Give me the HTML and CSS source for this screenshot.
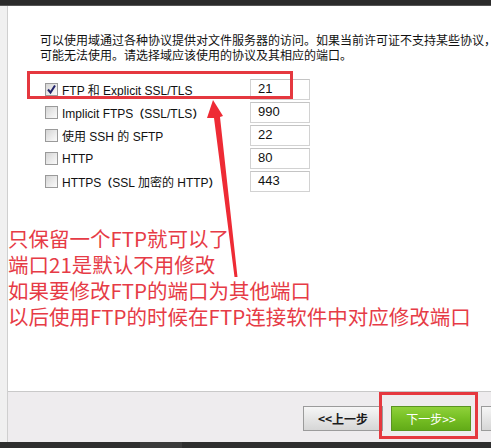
FILE: index.html
```html
<!DOCTYPE html>
<html lang="zh-CN">
<head>
<meta charset="utf-8">
<title>协议设置</title>
<link rel="stylesheet" href="styles.css">
</head>
<body>
<div class="page">
  <div class="topbar"></div>
  <div class="main">
    <div class="leftstrip"></div>
    <div class="content">
      <div class="body">
        <div class="intro">
          <p>可以使用域通过各种协议提供对文件服务器的访问。如果当前许可证不支持某些协议，</p>
          <p>可能无法使用。请选择域应该使用的协议及其相应的端口。</p>
        </div>
        <div class="options">
          <div class="row">
            <span class="cb checked"><svg viewBox="0 0 11 11" width="11" height="11"><path d="M2 5.5 L4.5 8.5 L9 1.5" fill="none" stroke="#22236a" stroke-width="2"/></svg></span>
            <span class="label">FTP 和 Explicit SSL/TLS</span>
            <span class="port">21</span>
          </div>
          <div class="row">
            <span class="cb"></span>
            <span class="label">Implicit FTPS<span class="paren">（</span>SSL/TLS<span class="paren">）</span></span>
            <span class="port">990</span>
          </div>
          <div class="row">
            <span class="cb"></span>
            <span class="label">使用 SSH 的 SFTP</span>
            <span class="port">22</span>
          </div>
          <div class="row">
            <span class="cb"></span>
            <span class="label">HTTP</span>
            <span class="port">80</span>
          </div>
          <div class="row">
            <span class="cb"></span>
            <span class="label">HTTPS<span class="paren">（</span>SSL 加密的 HTTP<span class="paren">）</span></span>
            <span class="port">443</span>
          </div>
          <div class="hl-box"></div>
        </div>
        <div class="notes">
          <p>只保留一个FTP就可以了</p>
          <p>端口21是默认不用修改</p>
          <p>如果要修改FTP的端口为其他端口</p>
          <p>以后使用FTP的时候在FTP连接软件中对应修改端口</p>
        </div>
      </div>
      <div class="footer">
        <button class="btn grey">&lt;&lt;上一步</button>
        <button class="btn green">下一步&gt;&gt;</button>
        <button class="btn grey third"></button>
        <div class="hl-next"></div>
      </div>
    </div>
  </div>
  <div class="bottombar"><span class="seg"></span></div>
  <svg class="arrow" width="491" height="448" viewBox="0 0 491 448">
    <polygon points="213,100 223,116 220,117 237.5,277 234.5,277 214,118 207,118" fill="#ee2b35"/>
  </svg>
</div>
</body>
</html>
```
FILE: styles.css
```css
* { box-sizing: border-box; }
html, body { margin: 0; padding: 0; }
body {
  width: 491px;
  height: 448px;
  overflow: hidden;
  background: #ffffff;
  font-family: "Liberation Sans", "Noto Sans CJK SC", sans-serif;
  font-size: 12px;
  color: #000;
}
p { margin: 0; }

.page {
  position: relative;
  width: 491px;
  height: 448px;
  display: flex;
  flex-direction: column;
}

.topbar {
  height: 6px;
  background: #2b2b2b;
  border-bottom: 1px solid #555;
}

.main {
  flex: 1;
  display: flex;
  min-height: 0;
}

.leftstrip {
  width: 8px;
  background: #f0f0f0;
  border-right: 1px solid #cfcfcf;
}

.content {
  flex: 1;
  display: flex;
  flex-direction: column;
  min-width: 0;
  overflow: hidden;
}

.body {
  flex: 1;
  padding-top: 26px;
}

.intro {
  padding-left: 32px;
  font-family: "Noto Sans CJK SC", sans-serif;
  font-size: 12px;
  line-height: 15px;
  color: #111;
  white-space: nowrap;
}

.options {
  position: relative;
  margin-top: 16px;
  padding-left: 37px;
}

.row {
  display: grid;
  grid-template-columns: 13px 184px 60px;
  column-gap: 4px;
  align-items: center;
  height: 23px;
}

.cb {
  width: 13px;
  height: 13px;
  border: 1px solid #9a9a9a;
  background: linear-gradient(135deg, #d4d4d4 0%, #ececec 60%, #fafafa 100%);
  display: flex;
  align-items: center;
  justify-content: center;
}

.label {
  white-space: nowrap;
  color: #111;
}

.paren {
  font-family: "Noto Sans CJK SC", sans-serif;
  font-weight: bold;
  font-size: 11px;
}

.port {
  height: 21px;
  border: 1px solid #d2d2d2;
  border-top-color: #c4c4c4;
  padding-left: 7px;
  line-height: 17px;
  font-size: 13px;
  color: #111;
  background: #fff;
}

.hl-box {
  position: absolute;
  left: 19px;
  top: -7px;
  width: 266px;
  height: 28px;
  border: 3px solid #e5383f;
}

.notes {
  margin-top: 32px;
  font-family: "Noto Sans CJK SC", sans-serif;
  font-size: 20.5px;
  line-height: 26px;
  color: #e63b46;
  white-space: nowrap;
}

.footer {
  position: relative;
  height: 51px;
  flex: none;
  background: #eeecee;
  border-top: 1px solid #c9c9c9;
  display: flex;
  align-items: flex-start;
  gap: 8px;
  padding-left: 295px;
  padding-top: 14px;
  overflow: hidden;
}

.btn {
  flex: none;
  width: 80px;
  height: 25px;
  padding: 0;
  font-family: "Noto Sans CJK SC", sans-serif;
  font-size: 12px;
  font-weight: bold;
  line-height: 23px;
  cursor: default;
}

.btn.grey {
  background: linear-gradient(180deg, #f6f6f6 0%, #e4e4e4 55%, #d6d6d6 100%);
  border: 1px solid #9b9b9b;
  color: #1a1a1a;
}

.btn.green {
  background: linear-gradient(180deg, #8fd13a 0%, #76bf24 50%, #62ab18 100%);
  border: 1px solid #5a9421;
  color: #ffffff;
  font-weight: normal;
}

.btn.third {
  margin-left: 2px;
}

.hl-next {
  position: absolute;
  left: 371px;
  top: 0px;
  width: 99px;
  height: 47px;
  border: 3px solid #e5383f;
}

.bottombar {
  height: 6px;
  background: #2e2e2e;
  position: relative;
}

.bottombar .seg {
  position: absolute;
  left: 140px;
  top: 0;
  width: 42px;
  height: 6px;
  background: #3b3b3b;
}

.arrow {
  position: absolute;
  left: 0;
  top: 0;
  pointer-events: none;
}
```
